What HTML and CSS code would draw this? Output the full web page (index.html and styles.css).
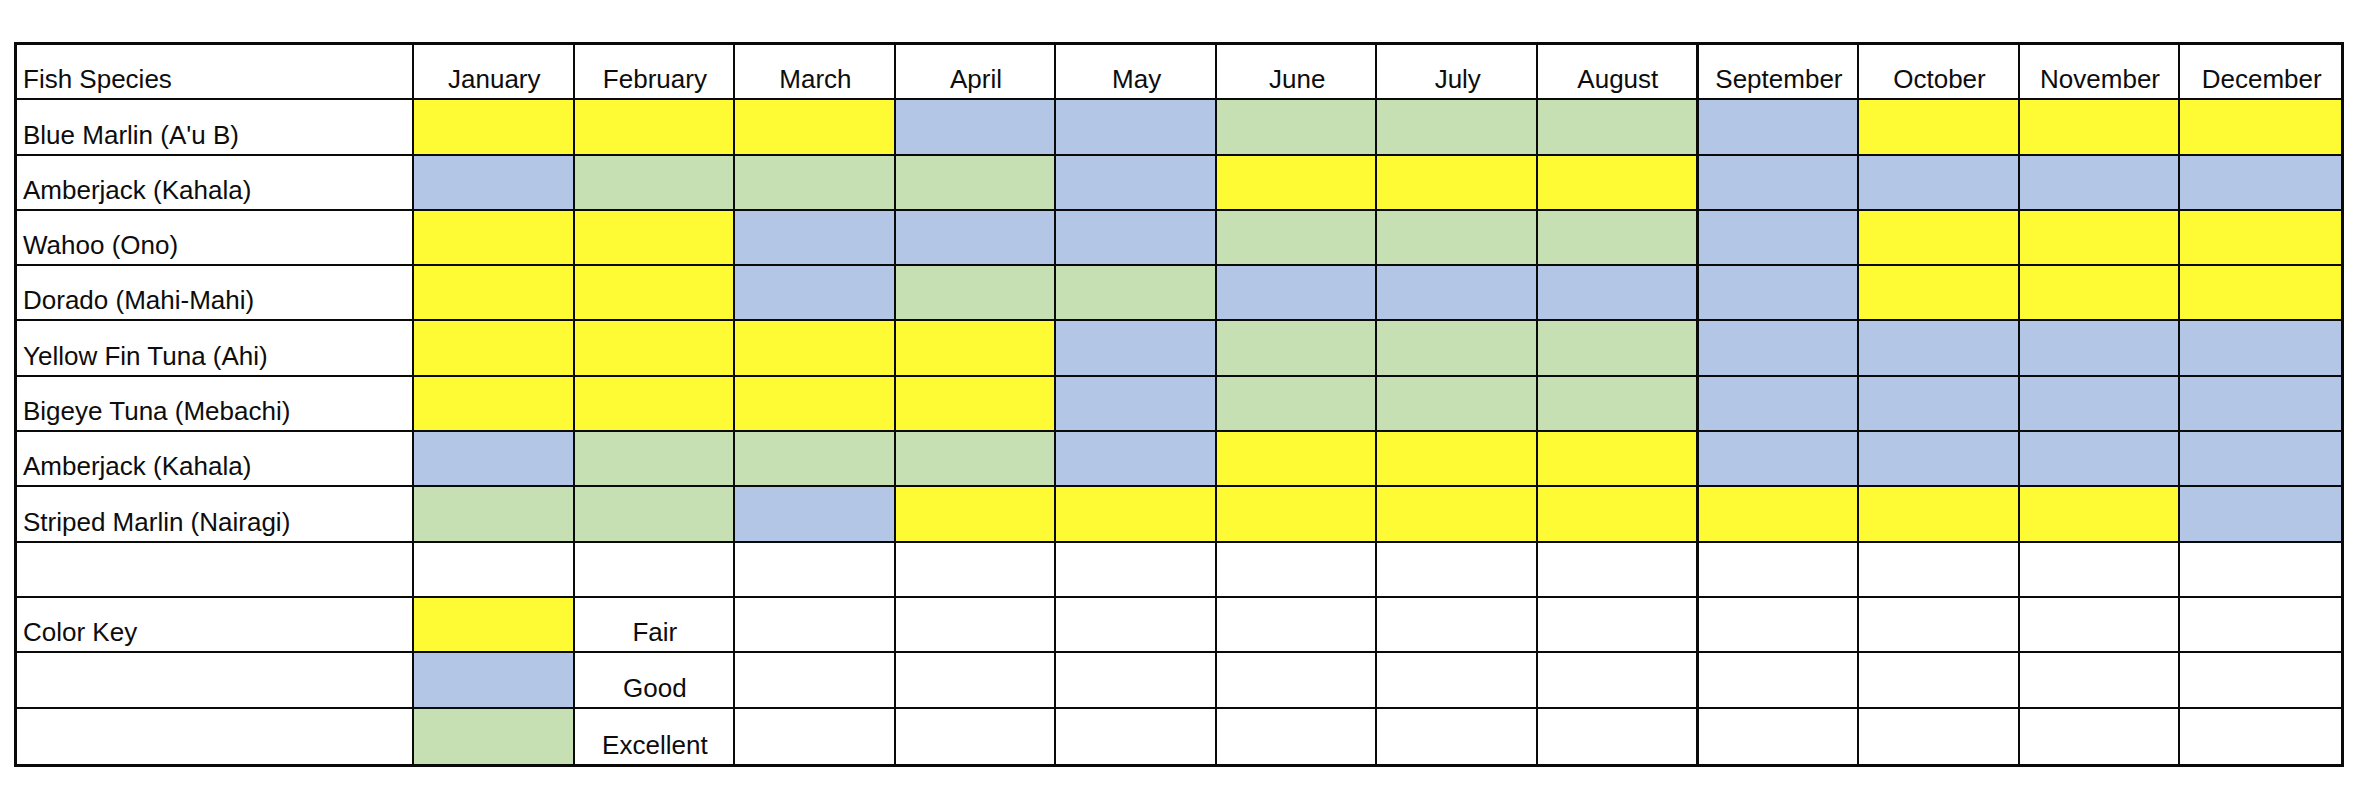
FILE: index.html
```html
<!DOCTYPE html>
<html>
<head>
<meta charset="utf-8">
<link rel="stylesheet" href="styles.css">
</head>
<body>
<table class="chart">
  <colgroup>
    <col class="c-name">
    <col span="12" class="c-month">
  </colgroup>
  <tr class="head">
    <td class="name">Fish Species</td>
    <td>January</td><td>February</td><td>March</td><td>April</td><td>May</td><td>June</td><td>July</td><td class="aug">August</td><td>September</td><td>October</td><td>November</td><td class="last">December</td>
  </tr>
  <tr>
    <td class="name">Blue Marlin (A'u B)</td>
    <td class="y"></td><td class="y"></td><td class="y"></td><td class="b"></td><td class="b"></td><td class="g"></td><td class="g"></td><td class="g aug"></td><td class="b"></td><td class="y"></td><td class="y"></td><td class="y last"></td>
  </tr>
  <tr>
    <td class="name">Amberjack (Kahala)</td>
    <td class="b"></td><td class="g"></td><td class="g"></td><td class="g"></td><td class="b"></td><td class="y"></td><td class="y"></td><td class="y aug"></td><td class="b"></td><td class="b"></td><td class="b"></td><td class="b last"></td>
  </tr>
  <tr>
    <td class="name">Wahoo (Ono)</td>
    <td class="y"></td><td class="y"></td><td class="b"></td><td class="b"></td><td class="b"></td><td class="g"></td><td class="g"></td><td class="g aug"></td><td class="b"></td><td class="y"></td><td class="y"></td><td class="y last"></td>
  </tr>
  <tr>
    <td class="name">Dorado (Mahi-Mahi)</td>
    <td class="y"></td><td class="y"></td><td class="b"></td><td class="g"></td><td class="g"></td><td class="b"></td><td class="b"></td><td class="b aug"></td><td class="b"></td><td class="y"></td><td class="y"></td><td class="y last"></td>
  </tr>
  <tr>
    <td class="name">Yellow Fin Tuna (Ahi)</td>
    <td class="y"></td><td class="y"></td><td class="y"></td><td class="y"></td><td class="b"></td><td class="g"></td><td class="g"></td><td class="g aug"></td><td class="b"></td><td class="b"></td><td class="b"></td><td class="b last"></td>
  </tr>
  <tr>
    <td class="name">Bigeye Tuna (Mebachi)</td>
    <td class="y"></td><td class="y"></td><td class="y"></td><td class="y"></td><td class="b"></td><td class="g"></td><td class="g"></td><td class="g aug"></td><td class="b"></td><td class="b"></td><td class="b"></td><td class="b last"></td>
  </tr>
  <tr>
    <td class="name">Amberjack (Kahala)</td>
    <td class="b"></td><td class="g"></td><td class="g"></td><td class="g"></td><td class="b"></td><td class="y"></td><td class="y"></td><td class="y aug"></td><td class="b"></td><td class="b"></td><td class="b"></td><td class="b last"></td>
  </tr>
  <tr>
    <td class="name">Striped Marlin (Nairagi)</td>
    <td class="g"></td><td class="g"></td><td class="b"></td><td class="y"></td><td class="y"></td><td class="y"></td><td class="y"></td><td class="y aug"></td><td class="y"></td><td class="y"></td><td class="y"></td><td class="b last"></td>
  </tr>
  <tr>
    <td class="name"></td>
    <td></td><td></td><td></td><td></td><td></td><td></td><td></td><td class="aug"></td><td></td><td></td><td></td><td class="last"></td>
  </tr>
  <tr>
    <td class="name">Color Key</td>
    <td class="y"></td><td>Fair</td><td></td><td></td><td></td><td></td><td></td><td class="aug"></td><td></td><td></td><td></td><td class="last"></td>
  </tr>
  <tr>
    <td class="name"></td>
    <td class="b"></td><td>Good</td><td></td><td></td><td></td><td></td><td></td><td class="aug"></td><td></td><td></td><td></td><td class="last"></td>
  </tr>
  <tr class="final">
    <td class="name"></td>
    <td class="g"></td><td>Excellent</td><td></td><td></td><td></td><td></td><td></td><td class="aug"></td><td></td><td></td><td></td><td class="last"></td>
  </tr>
</table>
</body>
</html>
```

FILE: styles.css
```css
html, body {
  margin: 0;
  padding: 0;
  background: #ffffff;
}

body {
  padding: 42px 0 0 14px;
  font-family: "Liberation Sans", Arial, sans-serif;
  color: #0d0d0d;
}

.chart {
  border-collapse: separate;
  border-spacing: 0;
  border: 3px solid #0a0a0a;
  table-layout: fixed;
  width: 2330px;
}

.c-name {
  width: 397px;
}

.chart td {
  box-sizing: border-box;
  height: 55.3px;
  padding: 0 4px 4px 6px;
  border-right: 2px solid #0a0a0a;
  border-bottom: 2px solid #0a0a0a;
  font-size: 26px;
  line-height: 30px;
  vertical-align: bottom;
  text-align: center;
  white-space: nowrap;
  overflow: hidden;
}

.chart td.name {
  text-align: left;
}

.chart td.aug {
  border-right-width: 3px;
}

.chart td.last {
  border-right: none;
}

.chart tr.final td {
  border-bottom: none;
}

.y {
  background: #fefb34;
}

.b {
  background: #b4c6e6;
}

.g {
  background: #c6e0b4;
}
```
